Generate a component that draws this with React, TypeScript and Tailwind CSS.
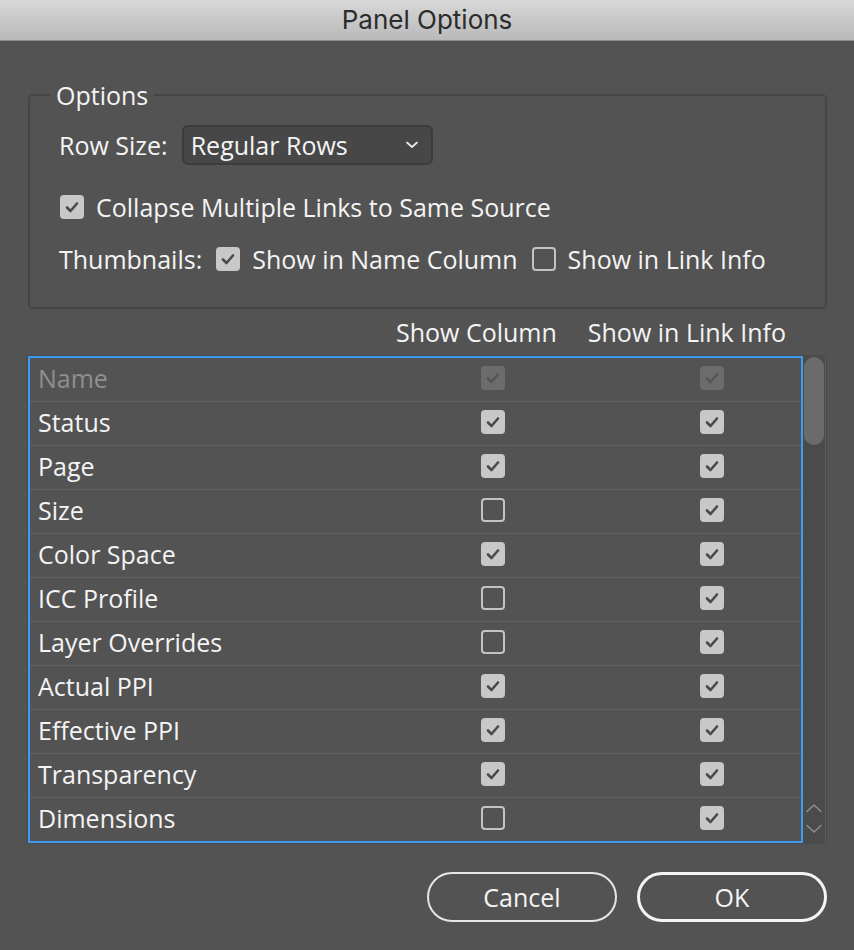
import React from "react";

type Row = { name: string; show: boolean; info: boolean; disabled?: boolean };

const rows: Row[] = [
  { name: "Name", show: true, info: true, disabled: true },
  { name: "Status", show: true, info: true },
  { name: "Page", show: true, info: true },
  { name: "Size", show: false, info: true },
  { name: "Color Space", show: true, info: true },
  { name: "ICC Profile", show: false, info: true },
  { name: "Layer Overrides", show: false, info: true },
  { name: "Actual PPI", show: true, info: true },
  { name: "Effective PPI", show: true, info: true },
  { name: "Transparency", show: true, info: true },
  { name: "Dimensions", show: false, info: true },
];

function Check({ checked, disabled }: { checked: boolean; disabled?: boolean }) {
  if (!checked) {
    return (
      <span className="block w-[24px] h-[24px] rounded-[4px] border-2 border-[#c4c4c4] shrink-0" />
    );
  }
  return (
    <span
      className={
        disabled
          ? "flex items-center justify-center w-[24px] h-[24px] rounded-[4px] bg-[#6c6c6c] shrink-0"
          : "flex items-center justify-center w-[24px] h-[24px] rounded-[4px] bg-[#c8c8c8] shrink-0"
      }
    >
      <svg width="16" height="16" viewBox="0 0 16 16">
        <path
          d="M3 8.5 L6.5 12 L13 4.5"
          fill="none"
          stroke={disabled ? "#555555" : "#4a4a4a"}
          strokeWidth="2.6"
          strokeLinecap="round"
          strokeLinejoin="round"
        />
      </svg>
    </span>
  );
}

export default function App() {
  return (
    <div
      className="w-[854px] h-[950px] bg-[#535353] text-[#f4f4f4] text-[25px] leading-[28px] font-medium overflow-hidden"
      style={{ fontFamily: '"Open Sans", "Noto Sans", sans-serif' }}
    >
      {/* title bar */}
      <div
        className="h-[41px] flex items-center justify-center bg-gradient-to-b from-[#d8d8d8] to-[#b9b9b9] border-b border-[#8e8e8e] text-[#2c2c2c] text-[26px] font-normal"
        style={{ fontFamily: 'Inter, "Liberation Sans", sans-serif' }}
      >
        Panel Options
      </div>

      <div className="px-[27px] pt-[40px]">
        <fieldset className="border-2 border-[#464646] rounded-[5px] pl-[29px] pr-[20px] pb-[34px] ml-[1px]">
          <legend className="ml-[-9px] px-[6px] leading-[28px]">Options</legend>
          <div className="flex items-center gap-[14px] mt-[16px] h-[40px]">
            <span>Row Size:</span>
            <div className="w-[251px] h-[40px] rounded-[6px] bg-[#474747] border-2 border-[#3c3c3c] flex items-center justify-between pl-[7px] pr-[12px]">
              <span>Regular Rows</span>
              <svg width="14" height="10" viewBox="0 0 14 10">
                <path d="M2 2.5 L7 7 L12 2.5" fill="none" stroke="#e6e6e6" strokeWidth="1.8" strokeLinecap="round" strokeLinejoin="round" />
              </svg>
            </div>
          </div>
          <div className="flex items-center gap-[12px] mt-[28px] h-[28px] ml-[1px]">
            <Check checked />
            <span>Collapse Multiple Links to Same Source</span>
          </div>
          <div className="flex items-center mt-[24px] h-[28px]">
            <span>Thumbnails:</span>
            <span className="ml-[14px]"><Check checked /></span>
            <span className="ml-[12px]">Show in Name Column</span>
            <span className="ml-[14px]"><Check checked={false} /></span>
            <span className="ml-[12px]">Show in Link Info</span>
          </div>
        </fieldset>

        <div className="flex justify-end gap-[31px] pr-[41px] h-[46px] items-center">
          <span>Show Column</span>
          <span>Show in Link Info</span>
        </div>

        <div className="flex border border-[#4a4a4a]">
          <div className="flex-1 border-2 border-[#3f9bf2]">
            {rows.map((r, i) => (
              <div
                key={r.name}
                className={
                  i < rows.length - 1
                    ? "h-[44px] flex items-center pl-[8px] pb-[3px] border-b border-[#616161]"
                    : "h-[43px] flex items-center pl-[8px] pb-[3px]"
                }
              >
                <span className={r.disabled ? "w-[443px] text-[#8f8f8f]" : "w-[443px]"}>{r.name}</span>
                <Check checked={r.show} disabled={r.disabled} />
                <span className="ml-[195px]">
                  <Check checked={r.info} disabled={r.disabled} />
                </span>
              </div>
            ))}
          </div>
          <div className="w-[23px] bg-[#4b4b4b] flex flex-col justify-between items-center pt-[1px] pb-[9px] border-r border-[#5c5c5c]">
            <div className="w-[20px] h-[88px] rounded-full bg-[#6b6b6b]" />
            <div className="flex flex-col items-center gap-[11px]">
              <svg width="18" height="10" viewBox="0 0 18 10">
                <path d="M2 8.5 L9 2 L16 8.5" fill="none" stroke="#8c8c8c" strokeWidth="1.6" strokeLinecap="round" strokeLinejoin="round" />
              </svg>
              <svg width="18" height="10" viewBox="0 0 18 10">
                <path d="M2 1.5 L9 8 L16 1.5" fill="none" stroke="#8c8c8c" strokeWidth="1.6" strokeLinecap="round" strokeLinejoin="round" />
              </svg>
            </div>
          </div>
        </div>

        <div className="flex justify-end gap-[20px] mt-[28px]">
          <button className="w-[190px] h-[50px] rounded-full border-2 border-[#e6e6e6] text-[#f4f4f4] text-[25px]">
            Cancel
          </button>
          <button className="w-[190px] h-[50px] rounded-full border-[3px] border-[#f4f4f4] text-[#f4f4f4] text-[25px]">
            OK
          </button>
        </div>
      </div>
    </div>
  );
}
